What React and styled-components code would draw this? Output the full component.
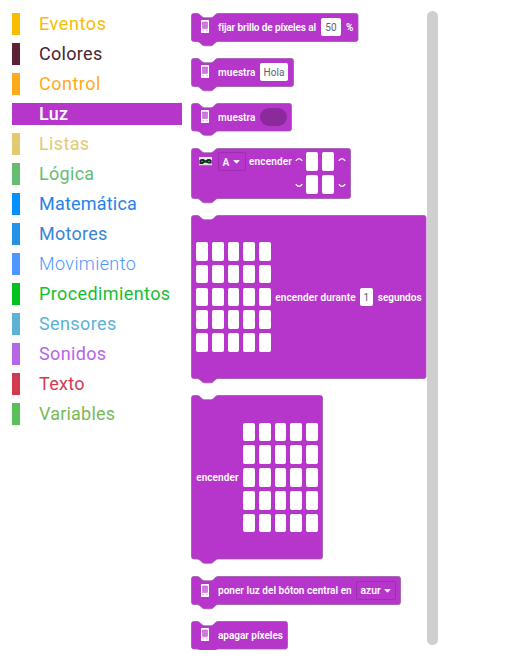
import React from "react";
import styled, { createGlobalStyle } from "styled-components";

const PURPLE = "#b635cb";
const EDGE = "#9c5aa9";

const GlobalStyle = createGlobalStyle`
  * { box-sizing: border-box; }
  body { margin: 0; background: #fff; font-family: Roboto, "Liberation Sans", sans-serif; }
`;

const Workspace = styled.div`
  display: flex;
  width: 521px;
  height: 658px;
  overflow: hidden;
`;

const Toolbox = styled.nav`
  display: flex;
  flex-direction: column;
  gap: 8px;
  width: 182px;
  padding: 13px 0 0 12px;
  flex: none;
`;

const Category = styled.div`
  height: 22px;
  line-height: 22px;
  padding-left: 19px;
  border-left: 8px solid ${(p) => p.$color};
  background: ${(p) => (p.$selected ? p.$color : "transparent")};
  color: ${(p) => (p.$selected ? "#fff" : p.$text || p.$color)};
  font-size: 18px;
  font-weight: ${(p) => (p.$selected ? 500 : p.$light ? 300 : 400)};
  letter-spacing: ${(p) => p.$spacing}px;
  white-space: nowrap;
`;

const Flyout = styled.main`
  display: flex;
  flex-direction: column;
  align-items: flex-start;
  width: 236px;
  height: 650px;
  margin-left: 9px;
  padding-top: 12.5px;
  overflow: hidden;
  flex: none;
`;

const Scrollbar = styled.div`
  width: 11px;
  height: 634px;
  margin-top: 11px;
  border-radius: 6px;
  background: #cfcfcf;
  flex: none;
`;

const BlockFrame = styled.section`
  position: relative;
  display: flex;
  align-items: ${(p) => (p.$top ? "flex-start" : "center")};
  width: ${(p) => p.$w}px;
  height: ${(p) => p.$h}px;
  margin-bottom: ${(p) => p.$after}px;
  padding-top: ${(p) => (p.$top ? 4.7 : 0)}px;
  padding-left: ${(p) => p.$pad}px;
  flex: none;
`;

const Outline = styled.svg`
  position: absolute;
  left: 0;
  top: 0;
  overflow: visible;
  z-index: -1;
`;

const Label = styled.span`
  width: ${(p) => p.$w}px;
  margin-left: ${(p) => p.$gap || 0}px;
  height: 18px;
  line-height: 19px;
  color: #fff;
  font-size: 10px;
  font-weight: 600;
  letter-spacing: ${(p) => p.$spacing ?? 0.08}px;
  white-space: nowrap;
  flex: none;
`;

const Field = styled.span`
  width: ${(p) => p.$w}px;
  height: 18px;
  line-height: 19px;
  border-radius: 2px;
  background: #fff;
  color: #575e75;
  font-size: 10px;
  letter-spacing: 0.1px;
  text-align: center;
  flex: none;
`;

const Dropdown = styled.span`
  display: flex;
  align-items: center;
  justify-content: space-between;
  width: ${(p) => p.$w}px;
  height: 19px;
  margin-left: ${(p) => p.$gap}px;
  padding: 1px 4.5px 0 4px;
  border: 1px solid #9d2eb0;
  border-radius: 2px;
  color: #fff;
  font-size: 10.3px;
  font-weight: 600;
  flex: none;
`;

const Socket = styled.span`
  width: 27px;
  height: 18px;
  margin-left: 4px;
  border-radius: 9px;
  background: #8a2a9b;
`;

const PixelGrid = styled.div`
  display: grid;
  grid-template-columns: repeat(${(p) => p.$cols}, 11.8px);
  grid-auto-rows: 18.6px;
  gap: 4.2px 3.9px;
  flex: none;
`;

const Pixel = styled.i`
  border-radius: 2px;
  background: #fff;
`;

const ArcColumn = styled.div`
  display: flex;
  flex-direction: column;
  gap: 21px;
  width: 8px;
  padding-top: 5.3px;
  margin-left: ${(p) => p.$left || 0}px;
  margin-right: ${(p) => p.$right || 0}px;
  flex: none;
`;

const PhoneSvg = styled.svg`
  width: 10px;
  height: 15px;
  margin-right: 8.5px;
  flex: none;
`;

const BoardSvg = styled.svg`
  width: 13px;
  height: 9px;
  margin-top: 4.6px;
  flex: none;
`;

const ArrowSvg = styled.svg`
  width: 7px;
  height: 4px;
  flex: none;
`;

const ArcSvg = styled.svg`
  width: 8px;
  height: 5px;
`;

function Block({ w, h, after, pad = 8.5, top, children }) {
  const right = w - 0.5;
  const d = `M .5 2.7 Q .5 .5 2.7 .5 H 6 C 8 .5 8.5 1.3 9.5 2.3 L 10.5 3.3 Q 12 4.8 13.7 4.8 H 19.5 Q 21.2 4.8 22.5 3.5 L 23.8 2.2 Q 25.2 .5 27 .5 H ${right - 2} Q ${right} .5 ${right} 2.7 V ${h - 2.2} Q ${right} ${h} ${right - 2} ${h} H 27 Q 25.2 ${h} 23.8 ${h + 1.7} L 22.5 ${h + 3} Q 21.2 ${h + 4.3} 19.5 ${h + 4.3} H 13.7 Q 12 ${h + 4.3} 10.5 ${h + 2.8} L 9.5 ${h + 1.8} Q 8 ${h} 6 ${h} H 2.7 Q .5 ${h} .5 ${h - 2.2} Z`;
  return (
    <BlockFrame $w={w} $h={h} $after={after} $pad={pad} $top={top}>
      <Outline width={w} height={h + 5}>
        <path d={d} fill={PURPLE} stroke={EDGE} strokeWidth=".8" />
      </Outline>
      {children}
    </BlockFrame>
  );
}

const Phone = () => (
  <PhoneSvg viewBox="0 0 10 15">
    <rect x="1" y="1" width="8" height="13" rx=".4" fill="#fff" />
    <rect x="2.5" y="3" width="5" height="6.5" fill="#cd7ada" stroke="#b850c8" strokeWidth=".5" />
    <path d="M2.5 11.8h1.6M5.9 11.8h1.6" stroke="#c979d6" strokeWidth=".8" />
  </PhoneSvg>
);

const Board = () => (
  <BoardSvg viewBox="0 0 13 9">
    <rect width="13" height="9" fill="#e4efe5" />
    <path d="M0 8.4h13" stroke="#5c9068" />
    <path d="M.4 3.3 2.2 1.9h2.5l1.2 1h1.4l1.2-1h2.4l1.7 1.4v3.3H9.2L7.7 5.7H5.3L3.8 6.9H.4z" fill="#142c20" />
    <path d="M2 4.5h2M9 4.5h2" stroke="#43a35d" />
    <circle cx="6.5" cy="3.8" r=".6" fill="#6575b4" />
  </BoardSvg>
);

const Arrow = () => (
  <ArrowSvg viewBox="0 0 7 4">
    <path d="M.8.5h5.4L3.5 3.3z" fill="#fff" stroke="#fff" strokeWidth=".8" strokeLinejoin="round" />
  </ArrowSvg>
);

const Arcs = ({ left, right }) => (
  <ArcColumn $left={left} $right={right}>
    <ArcSvg viewBox="0 0 8 5">
      <path d="M.8 3.9Q4-.7 7.2 3.9" fill="none" stroke="#fff" strokeWidth="1.3" />
    </ArcSvg>
    <ArcSvg viewBox="0 0 8 5">
      <path d="M.8 1.1Q4 5.7 7.2 1.1" fill="none" stroke="#fff" strokeWidth="1.3" />
    </ArcSvg>
  </ArcColumn>
);

const Pixels = ({ cols, rows }) => (
  <PixelGrid $cols={cols}>
    {Array.from({ length: cols * rows }, (_, i) => (
      <Pixel key={i} />
    ))}
  </PixelGrid>
);

const categories = [
  { name: "Eventos", color: "#f7bd05", spacing: 0.6 },
  { name: "Colores", color: "#5b2233", text: "#4a2432", spacing: 0.3 },
  { name: "Control", color: "#ffab19", spacing: 0.5 },
  { name: "Luz", color: PURPLE, selected: true, spacing: 0.3 },
  { name: "Listas", color: "#e3ca72", spacing: 0.35 },
  { name: "Lógica", color: "#65bd74", spacing: 0.3 },
  { name: "Matemática", color: "#0590ff", text: "#2583e2", spacing: 0.2 },
  { name: "Motores", color: "#2391e8", text: "#3885d3", spacing: 0.25 },
  { name: "Movimiento", color: "#4c97ff", light: true, spacing: 0.4 },
  { name: "Procedimientos", color: "#00c41d", text: "#19bd32", spacing: 0.4 },
  { name: "Sensores", color: "#5cb1d6", spacing: 0.4 },
  { name: "Sonidos", color: "#b765e5", spacing: 0.35 },
  { name: "Texto", color: "#d33a50", spacing: 0.3 },
  { name: "Variables", color: "#59c059", text: "#78b957", spacing: 0.2 },
];

export default function App() {
  return (
    <Workspace>
      <GlobalStyle />
      <Toolbox>
        {categories.map((c) => (
          <Category
            key={c.name}
            $color={c.color}
            $text={c.text}
            $selected={c.selected}
            $light={c.light}
            $spacing={c.spacing}
          >
            {c.name}
          </Category>
        ))}
      </Toolbox>
      <Flyout>
        <Block w={167.5} h={28.5} after={16.5}>
          <Phone />
          <Label $w={103} $spacing={-0.12}>fijar brillo de píxeles al</Label>
          <Field $w={20}>50</Field>
          <Label $w={10} $gap={5}>%</Label>
        </Block>
        <Block w={103} h={28.5} after={16.5}>
          <Phone />
          <Label $w={42}>muestra</Label>
          <Field $w={28}>Hola</Field>
        </Block>
        <Block w={101} h={28} after={17}>
          <Phone />
          <Label $w={37.5}>muestra</Label>
          <Socket />
        </Block>
        <Block w={160} h={50.5} after={17.2} pad={7.5} top>
          <Board />
          <Dropdown $w={28} $gap={6}>A<Arrow /></Dropdown>
          <Label $w={45} $gap={3.6} $spacing={0.14}>encender</Label>
          <Arcs left={0.5} right={3.5} />
          <Pixels cols={2} rows={2} />
          <Arcs left={4.5} />
        </Block>
        <Block w={235.5} h={163.5} after={16.8} pad={5.2}>
          <Pixels cols={5} rows={5} />
          <Label $w={85} $gap={4.5} $spacing={0.12}>encender durante</Label>
          <Field $w={12.5}>1</Field>
          <Label $w={45} $gap={5} $spacing={0}>segundos</Label>
        </Block>
        <Block w={132} h={164} after={16.5} pad={5.2}>
          <Label $w={47}>encender</Label>
          <Pixels cols={5} rows={5} />
        </Block>
        <Block w={210} h={28.5} after={16.5}>
          <Phone />
          <Label $w={133} $spacing={0.03}>poner luz del bóton central en</Label>
          <Dropdown $w={40.5} $gap={4.5}>azur<Arrow /></Dropdown>
        </Block>
        <Block w={97} h={28} after={0}>
          <Phone />
          <Label $w={66} $spacing={-0.03}>apagar píxeles</Label>
        </Block>
      </Flyout>
      <Scrollbar />
    </Workspace>
  );
}
